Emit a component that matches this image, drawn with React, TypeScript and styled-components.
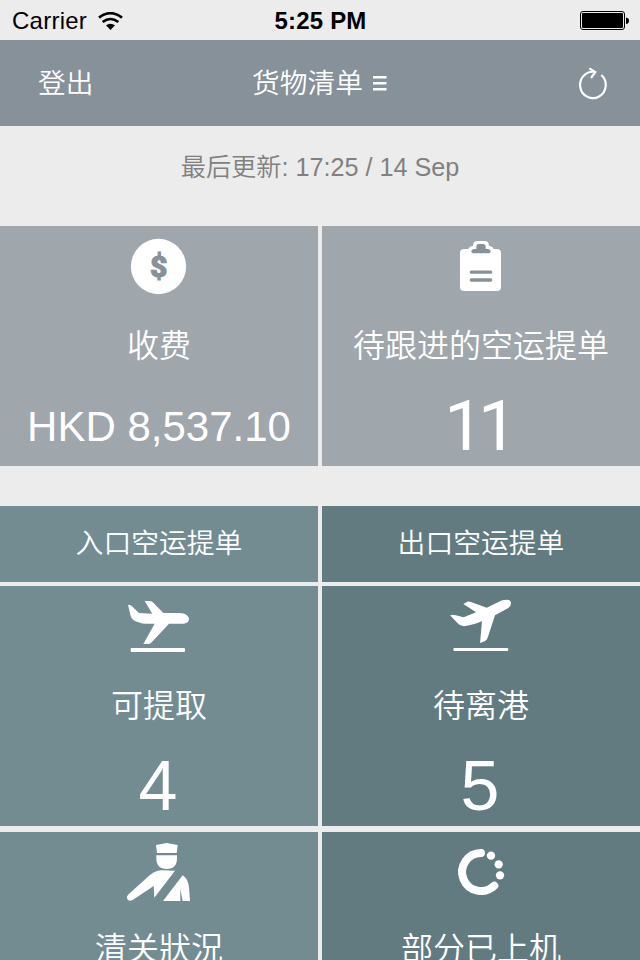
import React from "react";
import styled, { createGlobalStyle } from "styled-components";

const GlobalStyle = createGlobalStyle`
  * { box-sizing: border-box; }
  body {
    margin: 0;
    background: #ececec;
    overflow: hidden;
    font-family: "Liberation Sans", "Noto Sans CJK SC", sans-serif;
    font-weight: 350;
  }
`;

const Screen = styled.div`
  width: 640px;
  height: 960px;
  overflow: hidden;
  background: #ececec;
  display: flex;
  flex-direction: column;
`;

const StatusBar = styled.div`
  flex: none;
  height: 40px;
  padding: 1px 11px 0 12px;
  display: grid;
  grid-template-columns: 1fr auto 1fr;
  align-items: center;
  color: #000;
  font-size: 24px;
  line-height: 38px;
`;

const Carrier = styled.div`
  display: flex;
  align-items: center;
  gap: 11px;
  letter-spacing: 0.25px;
`;

const Clock = styled.div`
  font-weight: 700;
  font-size: 24px;
  letter-spacing: 0.2px;
`;

const BatteryIcon = styled.svg`
  justify-self: end;
  display: block;
`;

const NavBar = styled.header`
  flex: none;
  height: 86px;
  padding: 1px 33px 0 38px;
  display: grid;
  grid-template-columns: 1fr auto 1fr;
  align-items: center;
  background: #87919a;
  color: #fff;
  font-size: 27.7px;
  line-height: 85px;
`;

const NavLabel = styled.span`
  display: block;
  height: 85px;
`;

const NavTitle = styled.div`
  display: flex;
  align-items: center;
  gap: 10px;
  transform: translateX(-3px);
`;

const RefreshIcon = styled.svg`
  justify-self: end;
  display: block;
`;

const Updated = styled.div`
  flex: none;
  height: 100px;
  padding-top: 21px;
  text-align: center;
  color: #808080;
  font-size: 25.2px;
  line-height: 40px;
`;

const Row = styled.div<{ $after?: number }>`
  flex: none;
  display: grid;
  grid-template-columns: 318px 318px;
  gap: 4px;
  margin-bottom: ${(p) => p.$after ?? 0}px;
`;

const tones = { grey: "#9fa6ac", teal: "#738c92", deep: "#627b80" };
type Tone = keyof typeof tones;

const Heading = styled.div<{ $tone: Tone }>`
  height: 76px;
  background: ${(p) => tones[p.$tone]};
  color: #fff;
  text-align: center;
  font-size: 27.8px;
  line-height: 76px;
`;

const TileBox = styled.div<{ $tone: Tone }>`
  height: 240px;
  background: ${(p) => tones[p.$tone]};
  color: #fff;
  display: flex;
  flex-direction: column;
  align-items: center;
`;

const TileIcon = styled.svg`
  flex: none;
  width: 100px;
  height: 76px;
  fill: #fff;
`;

const TileLabel = styled.div<{ $lift?: number }>`
  flex: none;
  font-size: 32px;
  height: 88px;
  line-height: 88px;
  margin-top: ${(p) => -(p.$lift ?? 0)}px;
  white-space: nowrap;
`;

type ValueKind = "digit" | "pair" | "amount";

const TileValue = styled.div<{ $kind: ValueKind }>`
  font-family: ${(p) => (p.$kind === "pair" ? "Roboto" : '"Liberation Sans"')}, sans-serif;
  font-weight: 400;
  font-size: ${(p) => (p.$kind === "amount" ? 42 : 70)}px;
  letter-spacing: ${(p) => (p.$kind === "pair" ? -5.5 : 0)}px;
  padding-right: ${(p) => (p.$kind === "pair" ? 6 : p.$kind === "digit" ? 2 : 0)}px;
  height: 76px;
  line-height: ${(p) => (p.$kind === "amount" ? 74 : p.$kind === "pair" ? 72 : 73)}px;
  white-space: nowrap;
`;

interface TileProps {
  tone: Tone;
  viewBox: string;
  label: string;
  value?: string;
  kind?: ValueKind;
  lift?: number;
  children: React.ReactNode;
}

function Tile({ tone, viewBox, label, value, kind = "digit", lift, children }: TileProps) {
  return (
    <TileBox $tone={tone}>
      <TileIcon viewBox={viewBox}>{children}</TileIcon>
      <TileLabel $lift={lift}>{label}</TileLabel>
      {value && <TileValue $kind={kind}>{value}</TileValue>}
    </TileBox>
  );
}

export default function App() {
  return (
    <>
      <GlobalStyle />
      <Screen>
        <StatusBar>
          <Carrier>
            Carrier
            <svg width="25" height="18" viewBox="0 0 75 54">
              <g fill="none" stroke="#000" strokeWidth="8">
                <path d="M3 17 Q37 -10 72 17" />
                <path d="M14 30 Q37 12 61 30" />
              </g>
              <path d="M24 40 Q37 30 51 40 L37.500 54Z" />
            </svg>
          </Carrier>
          <Clock>5:25 PM</Clock>
          <BatteryIcon width="49" height="20" viewBox="0 0 49 20">
            <rect x="0.500" y="0.500" width="44" height="18" rx="2.500" fill="none" stroke="#000" />
            <rect x="2" y="2" width="41" height="15" rx="1" />
            <path d="M46 6.500 Q49 7 49 9.700 Q49 12.500 46 13Z" />
          </BatteryIcon>
        </StatusBar>

        <NavBar>
          <NavLabel>登出</NavLabel>
          <NavTitle>
            <NavLabel>货物清单</NavLabel>
            <svg width="14" height="16" viewBox="0 0 14 16" fill="#fff">
              <rect y="0" width="13.500" height="2.500" />
              <rect y="6" width="13.500" height="2.500" />
              <rect y="12" width="13.500" height="2.500" />
            </svg>
          </NavTitle>
          <RefreshIcon width="29" height="34" viewBox="777 202 87 102" fill="none" stroke="#fff" strokeWidth="6.500">
            <path d="M847 226 A38.500 39.500 0 1 1 829 217" />
            <path d="M811 206 L829 217 L816 235" />
          </RefreshIcon>
        </NavBar>

        <Updated>最后更新: 17:25 / 14 Sep</Updated>

        <Row $after={40}>
          <Tile tone="grey" viewBox="-3 3 300 228" label="收费" value="HKD 8,537.10" kind="amount">
            <circle cx="145.500" cy="124.500" r="83" />
            <text x="146" y="155" textAnchor="middle" fontFamily="Roboto" fontWeight="900" fontSize="90" fill="#87919a" stroke="#87919a" strokeWidth="3">$</text>
          </Tile>
          <Tile tone="grey" viewBox="273 3 300 228" label="待跟进的空运提单" value="11" kind="pair">
            <path d="M372 72 H385 Q387 64 399 62 Q400 48 411 48 H435 Q446 48 447 62 Q459 64 461 72 H471 Q483 72 483 84 V187 Q483 198 471 198 H372 Q360 198 360 187 V84 Q360 72 372 72Z" />
            <path d="M402 72 H409 V65 Q409 57 417 57 H429 Q437 57 437 65 V72 H444 Q452 73 452 78 Q452 85 444 85 H402 Q394 85 394 78 Q394 73 402 72Z" fill="#87919a" />
            <path d="M394 141.500 H452 M394 165 H452" stroke="#87919a" strokeWidth="10" strokeLinecap="round" />
          </Tile>
        </Row>

        <Row $after={4}>
          <Heading $tone="teal">入口空运提单</Heading>
          <Heading $tone="deep">出口空运提单</Heading>
        </Row>

        <Row $after={6}>
          <Tile tone="teal" viewBox="-3 -12 300 228" label="可提取" value="4">
            <path d="M54 45 Q61 43 66 49 L87 69 L127 71 L104 33 H121 Q126 33 130 38 L160 69 H208 Q225 69 233 78 Q238 83 237 88 Q236 99 222 101 H177 L125 157 Q121 162 115 162 H100 L134 101 H108 Q87 100 69 89 Q64 85 62 78Z" />
            <rect x="62" y="174" width="163" height="12" rx="3" />
          </Tile>
          <Tile tone="deep" viewBox="-27 -12 300 228" label="待离港" value="5">
            <path d="M30 76 Q38 73 47 76 L71 82 L108 67 L70 42 L82 35 Q87 33 93 36 L140 53 L183 32 Q191 29 202 29 Q213 30 213 40 Q213 48 205 54 L165 76 L143 143 Q140 151 134 154 L120 159 L126 94 Q101 105 77 108 Q65 110 56 103Z" />
            <rect x="40" y="174" width="165" height="9" rx="4" />
          </Tile>
        </Row>

        <Row>
          <Tile tone="teal" viewBox="-3 21 300 228" label="清关狀況" lift={3}>
            <path d="M138 60 L170 54 L203 60 L200 84 H141Z" />
            <path d="M139 91 H201 V100 Q201 132 170 132 Q139 132 139 100Z" />
            <path d="M195 137 L133 218 L131 183 L68 225 Q57 230 52 223 Q48 216 54 209 L119 151 Q137 136 157 136Z" />
            <path d="M159 228 L218 151 Q234 161 237 187 L240 228 H218 L211 192 V228Z" />
          </Tile>
          <Tile tone="deep" viewBox="93 21 300 228" label="部分已上机" lift={3}>
            <path d="M243 84 A57 57 0 1 0 283 182" fill="none" stroke="#fff" strokeWidth="24" strokeLinecap="round" />
            <circle cx="273" cy="92" r="12.500" />
            <circle cx="296" cy="118" r="12.500" />
            <circle cx="300" cy="151" r="12.500" />
          </Tile>
        </Row>
      </Screen>
    </>
  );
}
